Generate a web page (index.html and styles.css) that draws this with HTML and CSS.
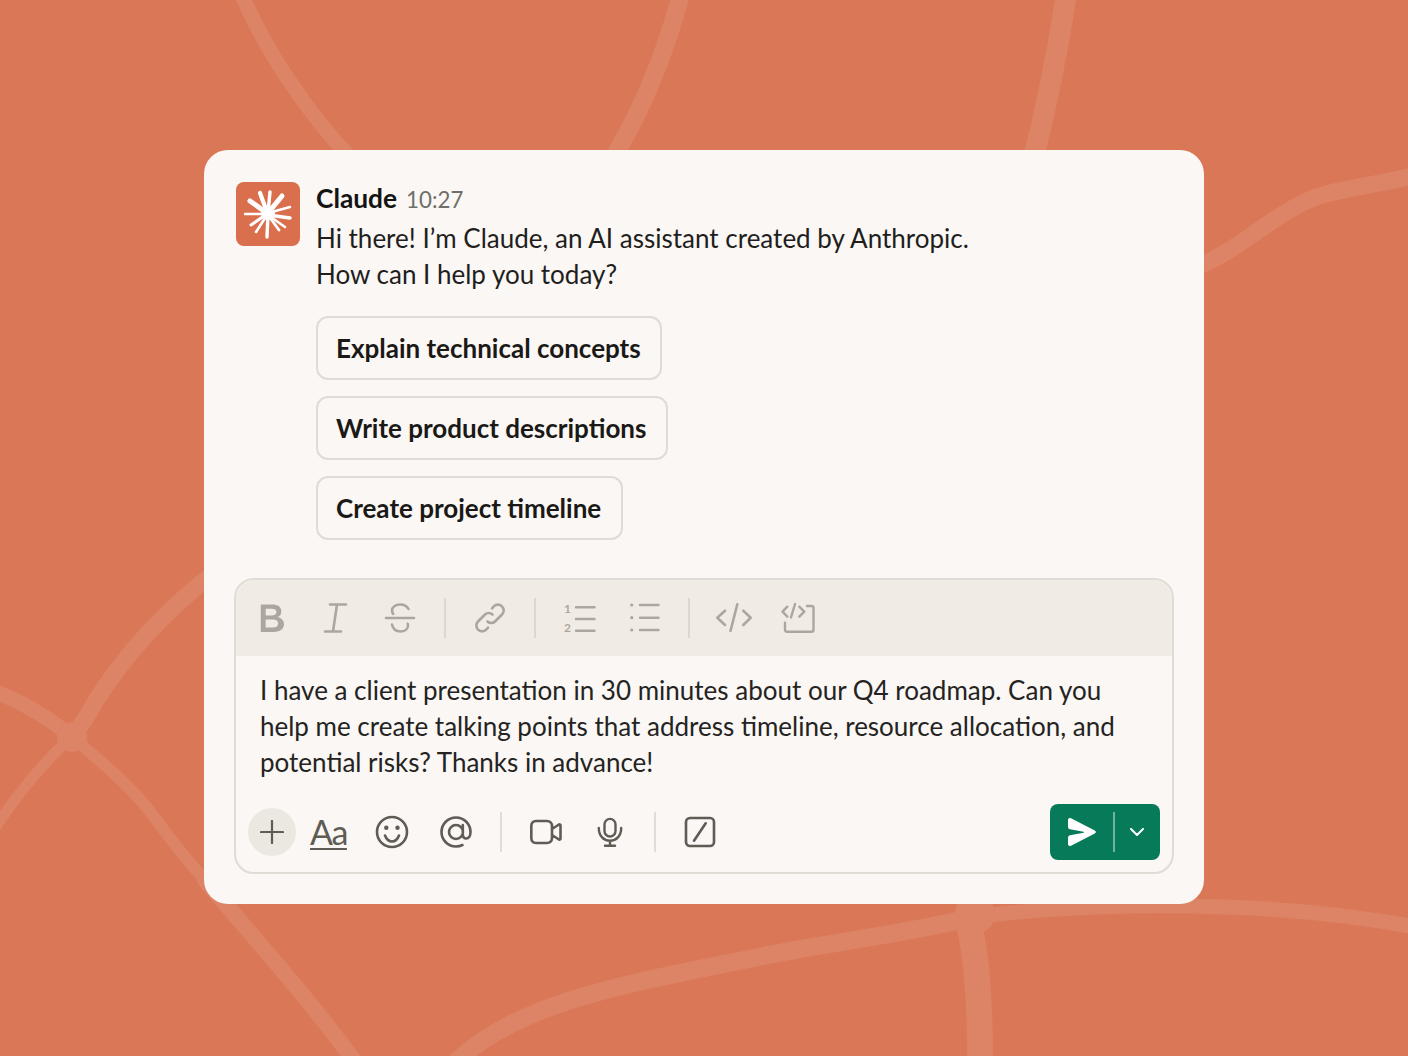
FILE: index.html
```html
<!DOCTYPE html>
<html lang="en">
<head>
<meta charset="utf-8">
<title>Claude</title>
<link rel="stylesheet" href="styles.css">
</head>
<body>
<svg class="bg-lines" viewBox="0 0 1408 1056" aria-hidden="true">
  <g fill="none" stroke="#dd8366" stroke-linecap="round">
    <path stroke-width="15" d="M240 -10C262 45 305 110 352 160"/>
    <path stroke-width="18" d="M682 -10C668 45 645 105 612 160"/>
    <path stroke-width="21" d="M1067 -10C1058 50 1047 105 1033 160"/>
    <path stroke-width="17" d="M1195 268C1250 245 1280 205 1330 193C1360 186 1385 183 1420 174"/>
    <path stroke-width="17" d="M215 572C160 615 125 655 95 702C88 715 80 727 72 737"/>
    <path stroke-width="15" d="M-10 690C20 700 45 715 72 737"/>
    <path stroke-width="11" d="M-10 835C20 790 45 760 72 737"/>
    <path stroke-width="12" d="M72 737C105 765 135 790 155 818C175 845 190 865 215 890"/>
    <path stroke-width="16" d="M205 880C260 945 310 1000 358 1066"/>
    <path stroke-width="18" d="M452 1066C510 1005 620 985 739 961C810 945 900 935 970 918"/>
    <path stroke-width="15" d="M970 918C1050 905 1250 895 1420 928"/>
    <path stroke-width="26" d="M968 920C978 960 980 1010 980 1066"/>
  </g>
  <circle cx="72" cy="737" r="15" fill="#dd8366"/>
  <circle cx="975" cy="914" r="20" fill="#dd8366"/>
</svg>
<main class="card">
  <section class="message">
    <div class="avatar">
      <svg viewBox="0 0 64 64" width="64" height="64" aria-hidden="true">
        <g stroke="#fff" stroke-linecap="round" fill="none">
          <path stroke-width="4.2" d="M31 30L24 11"/>
          <path stroke-width="3.4" d="M32 31L34 10"/>
          <path stroke-width="5" d="M32 31L46 14"/>
          <path stroke-width="2.6" d="M32 31L54 25"/>
          <path stroke-width="3.4" d="M32 33L54 36"/>
          <path stroke-width="2.6" d="M32 33L49 45"/>
          <path stroke-width="2.8" d="M32 33L43 48"/>
          <path stroke-width="3.4" d="M32 32L31 55"/>
          <path stroke-width="2.6" d="M31 33L20 50"/>
          <path stroke-width="3" d="M31 32L15 43"/>
          <path stroke-width="2.4" d="M31 32L9 32"/>
          <path stroke-width="5" d="M31 31L14 19"/>
        </g>
        <circle cx="32" cy="31" r="7" fill="#fff"/>
      </svg>
    </div>
    <div class="message-body">
      <div class="meta"><strong class="name">Claude</strong><span class="time">10:27</span></div>
      <p class="text">Hi there! I’m Claude, an AI assistant created by Anthropic.<br>How can I help you today?</p>
      <div class="suggestions">
        <button class="suggestion">Explain technical concepts</button>
        <button class="suggestion">Write product descriptions</button>
        <button class="suggestion">Create project timeline</button>
      </div>
    </div>
  </section>
  <section class="composer">
    <div class="format-bar">
      <svg class="icon" viewBox="0 0 32 32"><path class="f" fill-rule="evenodd" d="M4.800 2.500h11.200c6 0 9.300 2.600 9.300 6.900 0 2.900-1.500 4.900-4 5.700 3.400.7 6.700 3 6.700 7 0 5-3.900 7.800-10 7.800H4.800zM9.700 6.700v6.700h6c3.100 0 4.700-1.200 4.700-3.400S18.800 6.700 15.700 6.700zm0 10.800v8h7.200c3.500 0 5.200-1.400 5.200-4s-1.700-4-5.200-4z"/></svg>
      <svg class="icon gap-b" viewBox="0 0 32 32"><path class="s" d="M11 2.500h16M18 2.500L14 29.500M6 29.500h16" stroke-width="2.600" transform="translate(-1 0)"/></svg>
      <svg class="icon gap-b" viewBox="0 0 32 32"><path class="s" d="M24.500 7C23 4 20 2.500 16 2.500 11.500 2.500 8 5 8 8.500c0 1.300.4 2.400 1.200 3.300M2 16h28M8 22.500C9 27 12.500 29.500 16.500 29.500c4.300 0 7.500-2.500 7.500-6 0-.6-.1-1.200-.3-1.700" stroke-width="2.600"/></svg>
      <span class="divider fmt"></span>
      <svg class="icon" viewBox="0 0 32 32"><path class="s" d="M13.500 19.500c2 2 5.500 2 7.500 0l7-7c2.200-2.200 2.200-6 0-8.200s-6-2.200-8.200 0L18 6.300M18.500 12.500c-2-2-5.500-2-7.500 0l-7 7c-2.200 2.200-2.200 6 0 8.200s6 2.200 8.200 0l1.800-2" stroke-width="2.600"/></svg>
      <span class="divider fmt"></span>
      <svg class="icon" viewBox="0 0 32 32">
        <path class="s" d="M12 5.300h18.500M12 17h18.500M12 28.700h18.500" stroke-width="2.400"/>
        <text x="0" y="10.500" class="num">1</text><text x="0" y="30" class="num">2</text>
      </svg>
      <svg class="icon gap-b" viewBox="0 0 32 32"><path class="s" d="M3.700 3h.1M3.700 15.700h.1M3.700 28h.1" stroke-width="3.200"/><path class="s" d="M12 3h18.500M12 15.700h18.500M12 28h18.500" stroke-width="2.400"/></svg>
      <span class="divider fmt"></span>
      <svg class="icon" viewBox="0 0 32 32"><path class="s" d="M7 8.700L-.7 15.700 7 23M25.300 8.700L32.700 15.700 25.300 23M19.300 2.300L12.500 29" stroke-width="2.600"/></svg>
      <svg class="icon gap-b" viewBox="0 0 32 32"><path class="s" d="M5.300 4.700L.5 9.700l4.800 5M13 2L9 15.300M17.300 4.700l5 5-5 5M25 4h4.500q2 0 2 2v21.700q0 2-2 2H5q-2 0-2-2v-7" stroke-width="2.400"/></svg>
    </div>
    <p class="draft">I have a client presentation in 30 minutes about our Q4 roadmap. Can you help me create talking points that address timeline, resource allocation, and potential risks? Thanks in advance!</p>
    <div class="actions">
      <span class="plus"><svg viewBox="0 0 24 24" width="24" height="24"><path class="s dark" d="M12 1v22M1 12h22" stroke-width="2.200"/></svg></span>
      <span class="aa">Aa</span>
      <svg class="icon" viewBox="0 0 32 32"><circle class="s dark" cx="16" cy="16" r="15" stroke-width="2.600"/><path class="s dark" d="M9 19.500c1.500 4 4 6 7 6s5.500-2 7-6" stroke-width="2.600"/><circle class="dot" cx="10.300" cy="11.700" r="2.200"/><circle class="dot" cx="21.500" cy="11.700" r="2.200"/></svg>
      <svg class="icon gap-b" viewBox="0 0 32 32"><path class="s dark" d="M22.500 29C20.500 30 18.500 30.500 16 30.500 8 30.500 1.500 24 1.500 16S8 1.500 16 1.500 30.500 8 30.500 16c0 4-1.800 6.500-4.300 6.500s-3.400-2-3.400-4.500V9M23 16a7 7 0 1 1-14 0 7 7 0 0 1 14 0z" stroke-width="2.600"/></svg>
      <span class="divider act"></span>
      <svg class="icon" viewBox="0 0 32 32"><path class="s dark" d="M6 5h11c3 0 5 2 5 5v12c0 3-2 5-5 5H6c-3 0-4.700-2-4.700-5V10C1.300 7 3 5 6 5zM22 13l7-4.500c.8-.4 1.500 0 1.500 1v13c0 1-.7 1.400-1.500 1L22 19" stroke-width="2.600"/></svg>
      <svg class="icon gap-b" viewBox="0 0 32 32"><rect class="s dark" x="10.500" y="2.900" width="11" height="17.600" rx="5.500" stroke-width="2.400"/><path class="s dark" d="M4.800 12c0 8 5 12.700 11.200 12.700S27.200 20 27.200 12M16 24.700v5M11 29.700h10" stroke-width="2.400"/></svg>
      <span class="divider act"></span>
      <svg class="icon" viewBox="0 0 32 32"><rect class="s dark" x="2" y="2" width="28" height="28" rx="4" stroke-width="2.600"/><path class="s dark" d="M21.700 7.300L10 24.700" stroke-width="2.600"/></svg>
      <div class="send">
        <span class="send-main"><svg viewBox="0 0 28 28" width="28" height="28"><path fill="#fff" d="M0 2C0 .5 1.500-.5 3 .2L26.800 12.500c1.400.8 1.400 2.200 0 3L3 27.800c-1.500.7-3-.3-3-1.800v-6.200c0-1.200.8-2.300 2-2.500l13.500-2.500c.6-.1.6-.9 0-1L2 11.200C.8 11 0 9.900 0 8.700z"/></svg></span>
        <span class="send-sep"></span>
        <span class="send-more"><svg viewBox="0 0 14 8" width="14" height="8"><path d="M1 1l6 6 6-6" fill="none" stroke="#fff" stroke-width="2" stroke-linecap="round" stroke-linejoin="round"/></svg></span>
      </div>
    </div>
  </section>
</main>
</body>
</html>
```
FILE: styles.css
```css
* { box-sizing: border-box; }
html, body { height: 100%; }
body {
  margin: 0;
  background: #d97757;
  font-family: Lato, "Liberation Sans", sans-serif;
  color: #1f1e1d;
  display: flex;
  justify-content: center;
  align-items: flex-start;
  padding-top: 150px;
  overflow: hidden;
  position: relative;
}
.bg-lines {
  position: absolute;
  inset: 0;
  width: 1408px;
  height: 1056px;
}
.card {
  position: relative;
  width: 1000px;
  height: 754px;
  background: #faf7f4;
  border-radius: 24px;
  padding: 32px 30px 30px 30px;
}
.message { display: flex; gap: 16px; padding-left: 2px; }
.avatar {
  width: 64px;
  height: 64px;
  border-radius: 8px;
  background: #da6f4e;
  flex: none;
}
.avatar svg { display: block; }
.message-body { display: flex; flex-direction: column; }
.meta { display: flex; align-items: baseline; gap: 9px; height: 38px; line-height: 32px; }
.name { font-size: 26.300px; font-weight: 700; color: #141413; }
.time { font-size: 22.300px; color: #6f6e69; }
.text { margin: 0; font-size: 26px; line-height: 36px; }
.suggestions { display: flex; flex-direction: column; align-items: flex-start; gap: 16px; margin-top: 24px; }
.suggestion {
  height: 64px;
  padding: 0 19.500px 0 18px;
  border: 2px solid #dfdbd5;
  border-radius: 12px;
  background: transparent;
  font-family: inherit;
  font-size: 26px;
  font-weight: 700;
  color: #1a1917;
}
.composer {
  margin-top: 38px;
  height: 296px;
  border: 2px solid #dfdbd5;
  border-radius: 20px;
  overflow: hidden;
  display: flex;
  flex-direction: column;
}
.format-bar {
  height: 76px;
  background: #f0ece5;
  display: flex;
  align-items: center;
  padding: 0 0 0 20px;
  flex: none;
}
.icon { width: 32px; height: 32px; flex: none; overflow: visible; }
.gap-b { margin-left: 32px; }
.s { fill: none; stroke: #aba79f; stroke-linecap: round; stroke-linejoin: round; }
.s.dark { stroke: #5f5b55; }
.f { fill: #aba79f; }
.dot { fill: #5f5b55; }
.num { font-family: Lato, sans-serif; font-size: 12px; font-weight: 700; fill: #aba79f; }
.divider { width: 2px; height: 40px; flex: none; }
.divider.fmt { background: #dcd8d0; margin: 0 28px; }
.divider.act { background: #e0dcd6; margin: 0 28px; }
.draft {
  margin: 0;
  padding: 16px 24px 0;
  height: 144px;
  font-size: 26px;
  line-height: 36px;
  color: #24231f;
  flex: none;
}
.actions { display: flex; align-items: center; padding: 0 12px; height: 48px; margin-top: 8px; }
.plus {
  width: 48px;
  height: 48px;
  border-radius: 50%;
  background: #ebe8e2;
  display: flex;
  align-items: center;
  justify-content: center;
  flex: none;
}
.aa {
  margin-left: 14px;
  margin-right: 30px;
  width: 36px;
  font-size: 34px;
  font-weight: 400;
  line-height: 36px;
  color: #5f5b55;
  text-decoration: underline;
  text-decoration-thickness: 2px;
  text-underline-offset: 3px;
  letter-spacing: -1.500px;
  white-space: nowrap;
}
.send {
  margin-left: auto;
  width: 110px;
  height: 56px;
  background: #077a5a;
  border-radius: 8px;
  display: flex;
  align-items: center;
  flex: none;
}
.send-main { width: 63px; display: flex; justify-content: center; }
.send-sep { width: 2px; height: 40px; background: #6fb3a0; flex: none; }
.send-more { flex: 1; display: flex; justify-content: center; padding-right: 2px; }
.send svg { display: block; }
```
